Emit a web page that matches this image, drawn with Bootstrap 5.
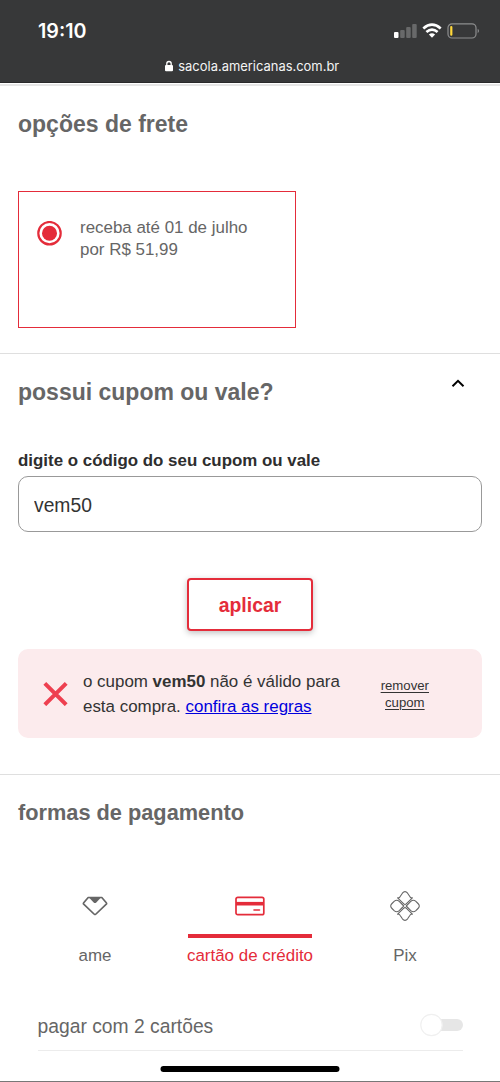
<!DOCTYPE html>
<html lang="pt-BR">
<head>
<meta charset="utf-8">
<meta name="viewport" content="width=device-width, initial-scale=1">
<title>sacola - americanas</title>
<link href="https://cdn.jsdelivr.net/npm/bootstrap@5.3.0/dist/css/bootstrap.min.css" rel="stylesheet">
<style>
:root{--red:#e42c3a;--gray:#666}
body{font-family:"Liberation Sans",Arial,sans-serif;font-size:16.93px;line-height:22px;color:#333;background:#fff}
.screen{width:500px;height:1082px;border-bottom:1px solid #777}
.phone-top{height:83px;background:#373839;border-bottom:1px solid #29292a;color:#fff;font-family:Inter,sans-serif}
.status-row{height:58px;padding:3px 20px 0 38px}
.clock{font-size:19.7px;font-weight:600}
.address{font-size:12.95px;line-height:16px;gap:4.5px;color:#f4f4f4;padding-left:3px}
.edge{height:3px;border-bottom:2px solid #e6e6e6}
.block{padding:0 18px;border-bottom:1px solid #dfdfdf}
.title{font-size:23px;line-height:28px;font-weight:700;color:var(--gray);margin:0}
.title-pay{font-size:21.75px}
.shipping{height:268px;padding-top:24px}
.coupon{height:421px;padding-top:24px}
.ship-option{width:278px;height:137px;margin-top:53px;border:1px solid var(--red);padding:25px 18px;gap:18px;color:var(--gray)}
.radio-mark{margin-top:4px}
.chevron{margin-right:17px;margin-top:1px}
.code-label{font-weight:700;color:#2e2e2e;margin-top:44px;line-height:22px;font-size:16.9px}
.code-input.form-control{height:56px;margin-top:4px;border:1px solid #999;border-radius:10px;padding:4px 15px 1px;font-size:19.3px;color:#333}
.apply.btn{width:126px;height:53px;margin-top:46px;border:2px solid var(--red);border-radius:4px;color:var(--red);background:#fff;font-size:19.4px;font-weight:700;padding:2px 0 0;box-shadow:0 2px 6px rgba(0,0,0,.25)}
.notice.alert{height:89px;margin:18px 0 0;border:0;border-radius:10px;background:#fcebed;color:#333;padding:0 52px 0 25px}
.notice-text{line-height:25px;margin-left:15px}
.notice-text a{color:#00d}
.remove{font-size:13.2px;line-height:17px;color:#333;text-underline-offset:2px;margin-right:1px}
.pay{padding:24px 18px 0}
.method.nav-link{padding:0;color:var(--gray);font-size:16.93px;line-height:22px;width:124px;white-space:nowrap}
.methods{margin-top:61px;padding:0 15px}
.method .glyph{height:50px;padding-bottom:11px;border-bottom:4px solid transparent;width:124px;margin-bottom:7px}
.method.active{color:var(--red)}
.method.active .glyph{border-color:var(--red)}
.two-cards{margin:35px 19px 0 19.5px;height:49px;border-bottom:1px solid #ececec;font-size:19.3px;color:var(--gray);padding-top:1px}
.toggle-track{width:43px;height:24px;margin-bottom:3px}
.home-bar{bottom:9px;width:179px;height:6px;border-radius:3px;background:#000}
</style>
</head>
<body>
<main class="screen position-relative overflow-hidden">
  <header class="phone-top">
    <div class="status-row d-flex align-items-center justify-content-between">
      <span class="clock">19:10</span>
      <svg width="86" height="18" viewBox="0 0 86 18" fill="none">
        <rect x="0" y="10" width="4.5" height="6" rx="1" fill="#fff"/>
        <g fill="#68696a"><rect x="6.2" y="8" width="4.5" height="8" rx="1"/><rect x="12.2" y="5" width="4.5" height="11" rx="1"/><rect x="18.2" y="2" width="4.5" height="14" rx="1"/></g>
        <g stroke="#fff" stroke-width="2.7"><path d="M29.3 6.5Q38 -1.1 46.7 6.5"/><path d="M32.4 10Q38 5.2 43.6 10"/></g>
        <path d="M34.9 12.5Q38 10 41.1 12.5L38 15.8Z" fill="#fff"/>
        <rect x="54" y="1.8" width="28" height="14.2" rx="4" stroke="#8d8e8f" stroke-width="1.2"/>
        <rect x="56.2" y="4" width="2.2" height="9.8" rx="1" fill="#ffd83a"/><path d="M83.7 6.8q2.6 2.1 0 4.4z" fill="#8d8e8f"/>
      </svg>
    </div>
    <div class="address d-flex align-items-center justify-content-center">
      <svg width="10" height="12" viewBox="0 0 10 12"><rect x="1" y="5" width="8" height="6.3" rx="1.1" fill="#fff"/><path d="M2.8 5.5V3.7a2.2 2.2 0 0 1 4.4 0v1.8" fill="none" stroke="#fff" stroke-width="1.3"/></svg>
      <span>sacola.americanas.com.br</span>
    </div>
  </header>
  <div class="edge"></div>

  <section class="block shipping">
    <h2 class="title">opções de frete</h2>
    <div class="ship-option d-flex align-items-start">
      <svg class="radio-mark flex-shrink-0" width="25" height="25" viewBox="0 0 25 25"><circle cx="12.5" cy="12.2" r="11.2" fill="#fff" stroke="#e42c3a" stroke-width="2.2"/><circle cx="12.5" cy="12.2" r="7.5" fill="#e42c3a"/></svg>
      <div>receba até 01 de julho<br>por R$ 51,99</div>
    </div>
  </section>

  <section class="block coupon">
    <div class="d-flex justify-content-between align-items-start">
      <h2 class="title">possui cupom ou vale?</h2>
      <svg width="14" height="10" viewBox="0 0 14 10" class="chevron" fill="none" stroke="#000" stroke-width="2"><path d="M1.5 7.2 7 1.8l5.5 5.4"/></svg>
    </div>
    <label class="code-label d-block" for="code">digite o código do seu cupom ou vale</label>
    <input id="code" class="code-input form-control" value="vem50">
    <button class="apply btn d-block mx-auto" type="button">aplicar</button>
    <div class="notice alert d-flex align-items-center">
      <svg class="flex-shrink-0" width="25" height="25" viewBox="0 0 25 25"><path d="M1.8 2.3l21.4 21.4M23.2 2.3 1.8 23.7" stroke="#ee4050" stroke-width="4" fill="none"/></svg>
      <div class="notice-text">o cupom <b>vem50</b> não é válido para<br>esta compra. <a href="#">confira as regras</a></div>
      <a class="remove ms-auto text-center" href="#">remover<br>cupom</a>
    </div>
  </section>

  <section class="pay">
    <h2 class="title title-pay">formas de pagamento</h2>
    <nav class="methods nav flex-nowrap justify-content-between">
      <a class="method nav-link d-flex flex-column align-items-center" href="#">
        <span class="glyph d-flex align-items-center justify-content-center">
          <svg width="26" height="20" viewBox="0 0 26 20"><path d="M6.2 1.5h13.6l4.5 5.2q.6.7 0 1.4L14 18q-1 1-2 0L1.7 8.1q-.6-.7 0-1.4z" fill="none" stroke="#666" stroke-width="1.7" stroke-linejoin="round"/><path d="M7 1.5h12l-4.7 5q-1.3 1.2-2.6 0z" fill="#666"/></svg>
        </span>
        <span>ame</span>
      </a>
      <a class="method nav-link active d-flex flex-column align-items-center" href="#">
        <span class="glyph d-flex align-items-center justify-content-center">
          <svg width="30" height="20" viewBox="0 0 30 20"><rect x="1" y="1.3" width="27.8" height="17.4" rx="1.8" fill="none" stroke="#e42c3a" stroke-width="1.7"/><path d="M1 7.7h28" stroke="#e42c3a" stroke-width="3.6"/><path d="M19 14h5.5" stroke="#e42c3a" stroke-width="1.6" stroke-linecap="round"/></svg>
        </span>
        <span>cartão de crédito</span>
      </a>
      <a class="method nav-link d-flex flex-column align-items-center" href="#">
        <span class="glyph d-flex align-items-center justify-content-center">
          <svg width="30" height="30" viewBox="0 0 30 30" fill="none" stroke="#666" stroke-width="1.1" stroke-linejoin="round">
            <path id="petal-top" d="M7.6 6.8H9Q9.5 6.7 10 5.8L12.4 2.2Q15-.9 17.600 2.200L20 5.800Q20.500 6.700 21 6.800H22.400L16.200 12.900Q15 14 13.800 12.900Z"/>
            <use href="#petal-top" transform="rotate(180 15 15)"/>
            <path id="petal-side" d="M13.8 15 9.200 19.600Q6.800 21.800 4.400 19.900L2 17.500Q-.6 15 2 12.500L4.400 10.100Q6.800 8.200 9.200 10.400Z"/>
            <use href="#petal-side" transform="rotate(180 15 15)"/>
          </svg>
        </span>
        <span>Pix</span>
      </a>
    </nav>
    <div class="two-cards d-flex align-items-center justify-content-between">
      <span>pagar com 2 cartões</span>
      <svg class="toggle-track" viewBox="0 0 43 24"><rect x="9" y="6" width="34" height="12" rx="6" fill="#e6e6e6"/><circle cx="11.5" cy="12" r="10.7" fill="#fff" stroke="#f0f0f0" stroke-width="1.2"/></svg>
    </div>
  </section>
  <div class="home-bar position-absolute start-50 translate-middle-x"></div>
</main>
<script src="https://cdn.jsdelivr.net/npm/bootstrap@5.3.0/dist/js/bootstrap.bundle.min.js"></script>
</body>
</html>
